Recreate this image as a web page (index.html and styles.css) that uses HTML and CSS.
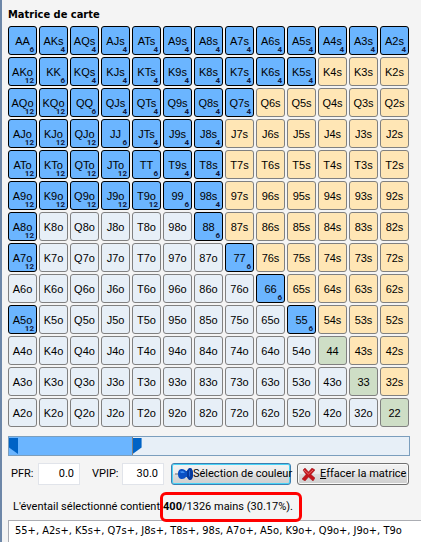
FILE: index.html
```html
<!DOCTYPE html>
<html lang="fr">
<head>
<meta charset="utf-8">
<meta name="viewport" content="width=device-width, initial-scale=1">
<title>Matrice de carte</title>
<link rel="stylesheet" href="styles.css">
</head>
<body>
<main class="panel">
  <h1 class="title">Matrice de carte</h1>
  <div class="matrix" id="matrix" role="group" aria-label="Matrice de carte"></div>

  <div class="slider">
    <div class="slider-fill"></div>
    <input class="range range-low" type="range" min="0" max="100" value="0" aria-label="PFR">
    <input class="range range-high" type="range" min="0" max="100" value="30" aria-label="VPIP">
  </div>

  <div class="controls">
    <label class="label" for="pfr">PFR:</label>
    <input class="number" id="pfr" type="text" value="0.0">
    <label class="label label-vpip" for="vpip">VPIP:</label>
    <input class="number" id="vpip" type="text" value="30.0">
    <button class="button button-active" type="button">
      <svg class="pin" viewBox="0 0 18 12" aria-hidden="true">
        <path d="M0 6H5" stroke="#8a8f96" stroke-width="1.4"/>
        <path d="M3 6C3 2 5 1 7 1C9 1 10 2 11 3H12C13 1 14 0 15 0C17 0 18 3 18 6S17 12 15 12C14 12 13 11 12 9H11C10 10 9 11 7 11C5 11 3 10 3 6Z" fill="#0b50c4"/>
        <path d="M12 3C13 1 14 0 15 0C17 0 18 3 18 6S17 12 15 12C14 12 13 11 12 9Z" fill="#073a9c"/>
        <path d="M5 3.500L8 3L10 5H6Z" fill="#3f8df2"/>
        <path d="M14 3L15 2V9L14 8Z" fill="#2468d8"/>
      </svg><span>Sélection de couleur</span>
    </button>
    <button class="button button-clear" type="button">
      <svg class="cross" viewBox="0 0 13 13" aria-hidden="true">
        <path d="M1 2L3 0L6.500 4L10 0L13 2L9 6.500L13 10L11 13L6.500 9L3 13L0 11L4 6.500Z" fill="#c4151c" stroke="#9c1c20" stroke-width=".5"/>
        <path d="M2 2L6.500 6L11 2" fill="none" stroke="#e66a68"/>
      </svg><span><u>E</u>ffacer la matrice</span>
    </button>
  </div>

  <p class="summary"><span>L'éventail sélectionné contient</span><span class="highlight"><b>400</b>/1326 mains (30.17%).</span></p>
  <textarea class="hands" aria-label="Éventail sélectionné" wrap="off" spellcheck="false">55+, A2s+, K5s+, Q7s+, J8s+, T8s+, 98s, A7o+, A5o, K9o+, Q9o+, J9o+, T9o</textarea>
</main>
<script src="matrix.js"></script>
</body>
</html>
```
FILE: styles.css
```css
* {
  box-sizing: border-box;
}

body {
  margin: 0;
  background: #f4f4f4;
  color: #000;
  font: 11px/16px Roboto, "Liberation Sans", sans-serif;
}

input,
button,
textarea {
  margin: 0;
  color: inherit;
  font: inherit;
}

.panel {
  display: flex;
  flex-direction: column;
  height: 100vh;
  overflow: hidden;
  padding: 7px 11px 0 6px;
  border-left: 2px solid #6d87a8;
}

.title {
  margin: 0 0 3px;
  font: bold 11px/16px "DejaVu Sans Condensed", "DejaVu Sans", sans-serif;
}

.matrix {
  display: grid;
  grid-template-columns: repeat(13, 1fr);
  grid-auto-rows: 29px;
  gap: 2px;
  margin-right: 1px;
}

.cell {
  position: relative;
  min-width: 0;
  padding: 0;
  border: 1px solid #808080;
  border-radius: 3px;
  font: 11px/12px "Liberation Sans", Arial, sans-serif;
  text-align: center;
}

.suited {
  background: #ffe6b5;
}

.offsuit {
  background: #e7eff7;
}

.pair {
  background: #cedec6;
}

.selected {
  border-color: #000;
  background: #6bb5ff;
}

.count {
  position: absolute;
  right: 2px;
  bottom: 0;
  color: #101840;
  font-family: Roboto, sans-serif;
  font-size: 8px;
  font-weight: bold;
  line-height: 8px;
}

.slider {
  position: relative;
  height: 20px;
  margin-top: 9px;
  border: 1px solid #7b9ebd;
  background: #e7eff7;
}

.slider-fill {
  width: 31%;
  height: 100%;
  border-right: 1px solid #808080;
  background: #6bb5ff;
}

.range {
  position: absolute;
  top: 1px;
  right: 0;
  height: 16px;
  margin: 0;
  appearance: none;
  background: none;
  pointer-events: none;
}

.range-low {
  left: 0;
  width: 100%;
}

.range-high {
  left: 9px;
  width: calc(100% - 9px);
}

.range::-webkit-slider-thumb {
  width: 9px;
  height: 16px;
  appearance: none;
  background: #0063c6;
  pointer-events: auto;
}

.range-low::-webkit-slider-thumb {
  clip-path: polygon(0 0, 100% 0, 100% 100%, 0 60%);
}

.range-high::-webkit-slider-thumb {
  clip-path: polygon(0 0, 100% 0, 100% 60%, 0 100%);
}

.controls {
  display: flex;
  align-items: center;
  height: 22px;
  margin-top: 7px;
}

.label {
  flex: none;
  width: 30px;
  padding-left: 3px;
}

.label-vpip {
  width: 42px;
  padding-left: 12px;
}

.number {
  flex: none;
  width: 42px;
  height: 22px;
  padding: 0 5px 2px;
  border: 1px solid #e1e4ea;
  background: #fff;
  text-align: right;
}

.button {
  display: flex;
  align-items: center;
  height: 22px;
  padding: 0 1px;
  border: 1px solid #707070;
  border-radius: 3px;
  background: linear-gradient(#f2f2f2, #ebebeb 50%, #dddddd 50%, #cfcfcf);
  box-shadow: inset 0 0 0 1px #fafafa;
  white-space: nowrap;
}

.button-active {
  flex: none;
  width: 120px;
  margin-left: 7px;
  padding-left: 3px;
  border-color: #3c7fb1;
  box-shadow: inset 0 0 0 1px #49d3f7;
}

.button-clear {
  flex: 1;
  gap: 5px;
  margin: 0 1px 0 6px;
  padding-left: 4px;
}

.pin {
  flex: none;
  width: 18px;
  height: 12px;
}

.cross {
  flex: none;
  width: 13px;
  height: 13px;
}

.summary {
  display: flex;
  align-items: center;
  height: 30px;
  margin: 7px 0 0;
  padding-left: 5px;
  white-space: nowrap;
}

.highlight {
  position: relative;
  z-index: 1;
  display: flex;
  align-items: center;
  height: 30px;
  padding: 0 6px 0 0;
  border: 3px solid #f00;
  border-radius: 6px;
}

.hands {
  flex: 1;
  min-height: 22px;
  margin: -2px -11px 0 0;
  padding: 2px 6px;
  overflow: hidden;
  border: 1px solid #abadb3;
  border-width: 1px 0 0 1px;
  outline: 0;
  background: #fff;
  font-family: "DejaVu Sans Condensed", "DejaVu Sans", sans-serif;
  resize: none;
}
```
FILE: matrix.js
```js
const ranks = "AKQJT98765432";

// Last selected column of the suited hands, by row.
const suitedUpTo = [12, 9, 7, 6, 6, 6];
const selectedOffsuit = new Set([
  "AKo", "AQo", "AJo", "ATo", "A9o", "A8o", "A7o", "A5o",
  "KQo", "KJo", "KTo", "K9o", "QJo", "QTo", "Q9o", "JTo", "J9o", "T9o"
]);

const matrix = document.getElementById("matrix");

for (let row = 0; row < 13; row++) {
  for (let col = 0; col < 13; col++) {
    let kind = "pair";
    let name = ranks[row] + ranks[col];
    let selected = row <= 9;
    let combos = 6;
    if (col > row) {
      kind = "suited";
      name += "s";
      selected = row < suitedUpTo.length && col <= suitedUpTo[row];
      combos = 4;
    } else if (col < row) {
      kind = "offsuit";
      name = ranks[col] + ranks[row] + "o";
      selected = selectedOffsuit.has(name);
      combos = 12;
    }
    const cell = document.createElement("button");
    cell.type = "button";
    cell.className = "cell " + kind + (selected ? " selected" : "");
    cell.setAttribute("aria-pressed", selected);
    cell.textContent = name;
    if (selected) {
      const count = document.createElement("span");
      count.className = "count";
      count.textContent = combos;
      cell.append(count);
    }
    matrix.append(cell);
  }
}
```
